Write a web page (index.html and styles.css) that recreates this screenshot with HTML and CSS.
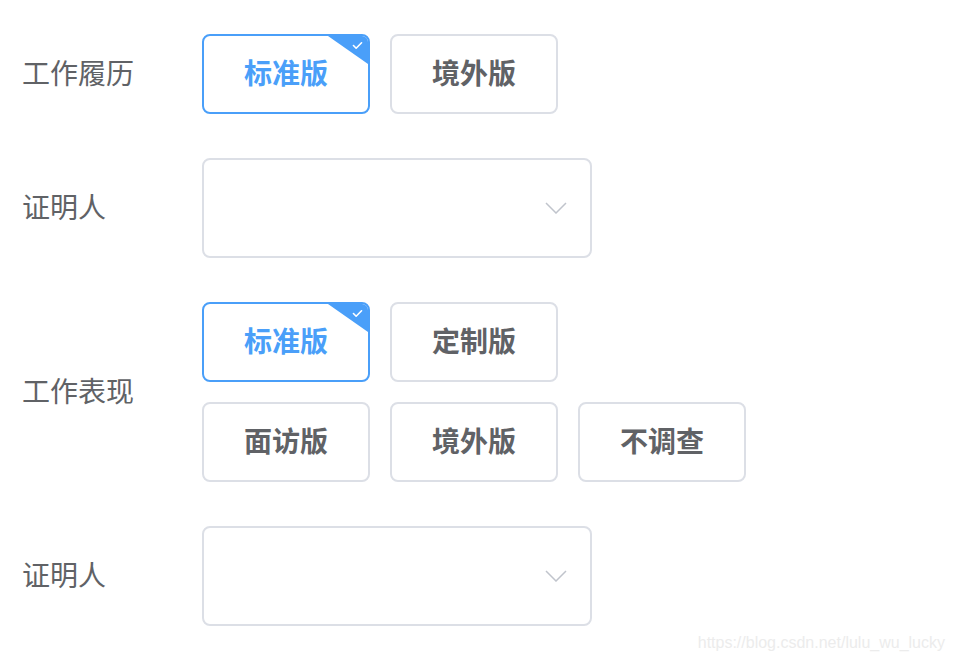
FILE: index.html
```html
<!DOCTYPE html>
<html lang="zh-CN">
<head>
<meta charset="utf-8">
<title>表单</title>
<link rel="stylesheet" href="styles.css">
</head>
<body>
<div class="form">
  <div class="row">
    <div class="label">工作履历</div>
    <div class="options">
      <div class="line">
        <div class="opt active">标准版<span class="corner"><svg viewBox="0 0 12 10" width="11" height="9"><path d="M1.5 5 L4.5 8 L10.5 2" fill="none" stroke="#fff" stroke-width="1.8" stroke-linecap="round" stroke-linejoin="round"/></svg></span></div>
        <div class="opt">境外版</div>
      </div>
    </div>
  </div>
  <div class="row">
    <div class="label">证明人</div>
    <div class="select">
      <svg class="arrow" viewBox="0 0 22 12" width="22" height="12"><path d="M1 1 L11 11 L21 1" fill="none" stroke="#c0c4cc" stroke-width="1.5"/></svg>
    </div>
  </div>
  <div class="row">
    <div class="label">工作表现</div>
    <div class="options">
      <div class="line">
        <div class="opt active">标准版<span class="corner"><svg viewBox="0 0 12 10" width="11" height="9"><path d="M1.5 5 L4.5 8 L10.5 2" fill="none" stroke="#fff" stroke-width="1.8" stroke-linecap="round" stroke-linejoin="round"/></svg></span></div>
        <div class="opt">定制版</div>
      </div>
      <div class="line">
        <div class="opt">面访版</div>
        <div class="opt">境外版</div>
        <div class="opt">不调查</div>
      </div>
    </div>
  </div>
  <div class="row">
    <div class="label">证明人</div>
    <div class="select">
      <svg class="arrow" viewBox="0 0 22 12" width="22" height="12"><path d="M1 1 L11 11 L21 1" fill="none" stroke="#c0c4cc" stroke-width="1.5"/></svg>
    </div>
  </div>
</div>
<div class="watermark">https://blog.csdn.net/lulu_wu_lucky</div>
</body>
</html>
```
FILE: styles.css
```css
html, body {
  margin: 0;
  padding: 0;
  background: #fff;
}
body {
  width: 954px;
  height: 660px;
  position: relative;
  overflow: hidden;
  font-family: "Noto Sans CJK SC", "Noto Sans", sans-serif;
}
.form {
  padding: 34px 0 0 22px;
  display: flex;
  flex-direction: column;
  gap: 44px;
}
.row {
  display: flex;
  align-items: center;
}
.label {
  width: 180px;
  font-size: 28px;
  color: #606266;
  line-height: 1;
  padding-bottom: 4px;
}
.options {
  display: flex;
  flex-direction: column;
  gap: 20px;
}
.line {
  display: flex;
  gap: 20px;
}
.opt {
  position: relative;
  box-sizing: border-box;
  width: 168px;
  height: 80px;
  padding-bottom: 4px;
  border: 2px solid #dcdfe6;
  border-radius: 8px;
  display: flex;
  align-items: center;
  justify-content: center;
  font-size: 28px;
  line-height: 1;
  font-weight: bold;
  color: #606266;
  overflow: hidden;
}
.opt.active {
  border-color: #4a9ff9;
  color: #4a9ff9;
}
.corner {
  position: absolute;
  top: 0;
  right: 0;
  width: 40px;
  height: 28px;
  background: #4a9ff9;
  clip-path: polygon(0 0, 100% 0, 100% 100%);
}
.corner svg {
  position: absolute;
  top: 5px;
  right: 5px;
}
.select {
  box-sizing: border-box;
  width: 390px;
  height: 100px;
  border: 2px solid #dcdfe6;
  border-radius: 8px;
  display: flex;
  align-items: center;
  justify-content: flex-end;
  padding-right: 23px;
}
.arrow {
  display: block;
}
.watermark {
  position: absolute;
  right: 9px;
  bottom: 8px;
  font-family: "Liberation Sans", Arial, sans-serif;
  font-size: 16px;
  color: #ececec;
}
```
